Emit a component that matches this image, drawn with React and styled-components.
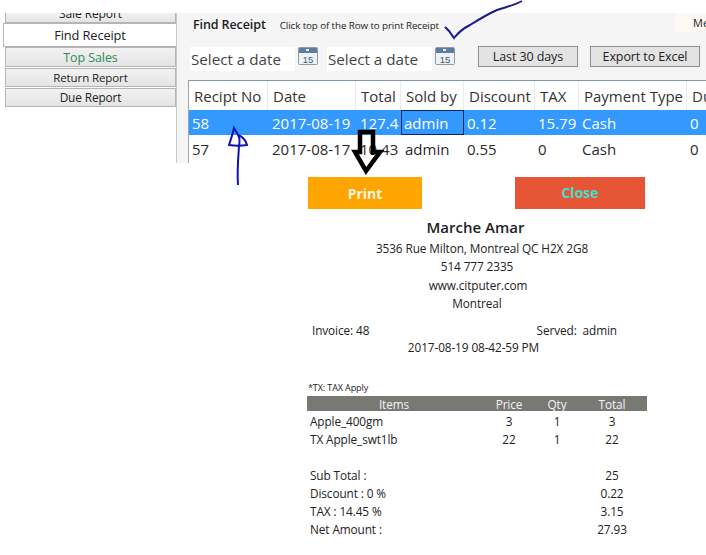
import React from "react";
import styled, { createGlobalStyle } from "styled-components";

const Global = createGlobalStyle`
  html, body { margin: 0; padding: 0; background: #fff; }
  body { font-family: "Open Sans", "Noto Sans", sans-serif; color: #222; }
`;

const Page = styled.div`
  position: relative;
  width: 706px;
  height: 555px;
  overflow: hidden;
  background: #fff;
`;
const Top = styled.div`
  display: flex;
  height: 150px;
  margin-top: 13px;
`;
const Sidebar = styled.nav`
  width: 176px;
  flex: none;
  display: flex;
  flex-direction: column;
  align-items: flex-end;
  border-right: 1px solid #c9c9c9;
`;
const SideButton = styled.div`
  box-sizing: border-box;
  width: ${p => (p.$active ? "173px" : "171px")};
  height: ${p => p.$h}px;
  margin-top: ${p => p.$gap || 0}px;
  display: flex;
  justify-content: center;
  align-items: ${p => (p.$clipped ? "flex-end" : "center")};
  overflow: hidden;
  font-size: ${p => p.$fs || 12}px;
  letter-spacing: -0.1px;
  color: ${p => p.$color || "#222"};
  background: ${p => (p.$active ? "#fff" : "linear-gradient(#f2f2f2,#e4e4e4)")};
  border: 1px solid #b5b5b5;
  border-top: ${p => (p.$clipped ? "none" : "1px solid #b5b5b5")};
  border-right: ${p => (p.$active ? "none" : "1px solid #b5b5b5")};
  line-height: 17px;
`;
const Panel = styled.main`
  flex: 1;
  min-width: 0;
  display: flex;
  flex-direction: column;
  background: #f5f5f5;
  padding-left: 11px;
  overflow: hidden;
`;
const TitleRow = styled.div`
  height: 23px;
  display: flex;
  align-items: center;
  padding-left: 5px;
  gap: 14px;
  position: relative;
`;
const Title = styled.span`
  font-size: 12.5px;
  font-weight: 600;
  color: #1c1c1c;
  letter-spacing: -0.1px;
`;
const Hint = styled.span`
  font-size: 9.8px;
  color: #222;
  letter-spacing: -0.1px;
  padding-top: 1px;
`;
const TabStub = styled.div`
  position: absolute;
  top: 0;
  right: 0;
  width: 31px;
  height: 19px;
  padding-left: 18px;
  box-sizing: border-box;
  background: #fff9f5;
  font-size: 11px;
  line-height: 19px;
  white-space: nowrap;
  overflow: hidden;
`;
const FilterRow = styled.div`
  height: 44px;
  display: flex;
  align-items: center;
  padding-left: 2px;
`;
const DateBox = styled.div`
  width: 105px;
  height: 24px;
  margin-top: 2px;
  padding-left: 1px;
  box-sizing: border-box;
  background: #fff;
  font-size: 15.2px;
  line-height: 25px;
  color: #444;
  white-space: nowrap;
`;
const CalButton = styled.span`
  width: 20px;
  height: 18px;
  margin-left: 3px;
  margin-right: 9px;
  margin-top: -5px;
  display: inline-flex;
`;
const ActionButton = styled.button`
  box-sizing: border-box;
  height: 21px;
  width: ${p => p.$w}px;
  margin-left: ${p => p.$ml}px;
  margin-top: -4px;
  padding: 0;
  font-family: inherit;
  font-size: 12.5px;
  letter-spacing: -0.1px;
  color: #222;
  background: #e3e3e3;
  border: 1px solid #8f8f8f;
`;
const Grid = styled.div`
  flex: 1;
  background: #fff;
  border-top: 1px solid #7f97a8;
  border-left: 1px solid #9aa7b0;
  overflow: hidden;
  display: flex;
  flex-direction: column;
`;
const Row = styled.div`
  display: grid;
  grid-template-columns: 79px 88px 45px 63px 71px 44px 108px 60px;
  height: ${p => p.$h}px;
  align-items: center;
  background: ${p => p.$bg || "#fff"};
  color: ${p => p.$fg || "#2a2a2a"};
  font-size: 15px;
  white-space: nowrap;
`;
const HeadCell = styled.div`
  height: 100%;
  display: flex;
  align-items: center;
  padding: 1px 0 0 5px;
  box-sizing: border-box;
  border-right: 1px solid #e8ecef;
  overflow: hidden;
  color: #333;
`;
const Cell = styled.div`
  height: 100%;
  display: flex;
  align-items: center;
  padding: 1px 0 0 ${p => p.$pl ?? 4}px;
  box-sizing: border-box;
  overflow: hidden;
  ${p => p.$focus && "border: 1px solid #0a2a55;"}
`;
const Buttons = styled.div`
  display: flex;
  justify-content: space-between;
  width: 337px;
  margin: 14px 0 0 308px;
`;
const BigButton = styled.button`
  width: ${p => p.$w}px;
  height: 32px;
  padding: 0 0 ${p => p.$pb || 0}px;
  border: none;
  font-family: inherit;
  font-size: 14px;
  font-weight: 700;
  background: ${p => p.$bg};
  color: ${p => p.$fg};
`;
const Receipt = styled.section`
  width: 340px;
  margin: 0 0 0 307px;
  display: flex;
  flex-direction: column;
  font-size: 11.8px;
  letter-spacing: -0.1px;
  color: #222;
`;
const ShopName = styled.div`
  text-align: center;
  font-size: 15px;
  font-weight: 600;
  line-height: 20px;
  margin: 8px 0 2px;
  letter-spacing: 0;
  padding-right: 3px;
`;
const Line = styled.div`
  text-align: center;
  line-height: 18.4px;
  padding-left: ${p => Math.max(p.$dx || 0, 0)}px;
  padding-right: ${p => Math.max(-(p.$dx || 0), 0)}px;
`;
const MetaRow = styled.div`
  display: flex;
  justify-content: space-between;
  margin-top: 10px;
  padding: 0 30px 0 5px;
  line-height: 15px;
`;
const Note = styled.div`
  font-size: 9px;
  margin-top: 25px;
  line-height: 14px;
  padding-left: 1px;
`;
const TableHead = styled.div`
  display: grid;
  grid-template-columns: 174px 56px 40px 70px;
  height: 15px;
  margin-top: 1px;
  background: #797974;
  color: #f4f4f4;
  line-height: 16px;
  text-align: center;
`;
const TableRow = styled.div`
  display: grid;
  grid-template-columns: 174px 56px 40px 70px;
  height: 18px;
  line-height: 18px;
  margin-top: ${p => p.$mt || 0}px;
`;
const Left = styled.span`
  padding-left: 3px;
  white-space: nowrap;
`;
const Center = styled.span`
  text-align: center;
`;
const Overlay = styled.svg`
  position: absolute;
  left: 0;
  top: 0;
  pointer-events: none;
`;

const Calendar = () => (
  <svg width="20" height="18" viewBox="0 0 20 18">
    <rect x="0.5" y="0.5" width="19" height="17" rx="1" fill="#eef2f6" stroke="#8a9aa8" />
    <rect x="1" y="1" width="18" height="5" fill="#5d7d9e" />
    <rect x="8" y="2" width="3" height="2" fill="#e8eef4" />
    <text x="10" y="15.5" textAnchor="middle" fontSize="9.5" fontFamily="Liberation Sans, sans-serif" fill="#44586c">15</text>
  </svg>
);

const columns = ["Recipt No", "Date", "Total", "Sold by", "Discount", "TAX", "Payment Type", "Due"];

export default function App() {
  return (
    <Page>
      <Global />
      <Top>
        <Sidebar>
          <SideButton $h={10} $clipped>Sale Report</SideButton>
          <SideButton $h={24} $active $fs={12.8}>Find Receipt</SideButton>
          <SideButton $h={20} $color="#2e8b57" $fs={12.5}>Top Sales</SideButton>
          <SideButton $h={19} $gap={1} $fs={11.5}>Return Report</SideButton>
          <SideButton $h={19} $gap={1} $fs={11.8}>Due Report</SideButton>
        </Sidebar>
        <Panel>
          <TitleRow>
            <Title>Find Receipt</Title>
            <Hint>Click top of the Row to print Receipt</Hint>
            <TabStub>Menu</TabStub>
          </TitleRow>
          <FilterRow>
            <DateBox>Select a date</DateBox>
            <CalButton><Calendar /></CalButton>
            <DateBox>Select a date</DateBox>
            <CalButton><Calendar /></CalButton>
            <ActionButton $w={100} $ml={14}>Last 30 days</ActionButton>
            <ActionButton $w={110} $ml={12}>Export to Excel</ActionButton>
          </FilterRow>
          <Grid>
            <Row $h={29}>
              {columns.map(c => <HeadCell key={c}>{c}</HeadCell>)}
            </Row>
            <Row $h={25} $bg="#3399ff" $fg="#fff">
              <Cell $pl={3}>58</Cell>
              <Cell>2017-08-19</Cell>
              <Cell>127.4</Cell>
              <Cell $focus $pl={2}>admin</Cell>
              <Cell $pl={3}>0.12</Cell>
              <Cell $pl={3}>15.79</Cell>
              <Cell $pl={3}>Cash</Cell>
              <Cell $pl={3}>0</Cell>
            </Row>
            <Row $h={26}>
              <Cell $pl={3}>57</Cell>
              <Cell>2017-08-17</Cell>
              <Cell>10.43</Cell>
              <Cell>admin</Cell>
              <Cell $pl={3}>0.55</Cell>
              <Cell $pl={3}>0</Cell>
              <Cell $pl={3}>Cash</Cell>
              <Cell $pl={3}>0</Cell>
            </Row>
          </Grid>
        </Panel>
      </Top>
      <Buttons>
        <BigButton $w={114} $bg="#ffa500" $fg="#fbf3e0">Print</BigButton>
        <BigButton $w={130} $bg="#e65535" $fg="#40e0d0" $pb={1}>Close</BigButton>
      </Buttons>
      <Receipt>
        <ShopName>Marche Amar</ShopName>
        <Line $dx={10}>3536 Rue Milton, Montreal QC H2X 2G8</Line>
        <Line>514 777 2335</Line>
        <Line $dx={2}>www.citputer.com</Line>
        <Line>Montreal</Line>
        <MetaRow><span>Invoice: 48</span><span>Served:&nbsp; admin</span></MetaRow>
        <Line $dx={-7}>2017-08-19 08-42-59 PM</Line>
        <Note>*TX: TAX Apply</Note>
        <TableHead><span>Items</span><span>Price</span><span>Qty</span><span>Total</span></TableHead>
        <TableRow $mt={1}><Left>Apple_400gm</Left><Center>3</Center><Center>1</Center><Center>3</Center></TableRow>
        <TableRow><Left>TX Apple_swt1lb</Left><Center>22</Center><Center>1</Center><Center>22</Center></TableRow>
        <TableRow $mt={18}><Left>Sub Total :</Left><Center /><Center /><Center>25</Center></TableRow>
        <TableRow><Left>Discount : 0 %</Left><Center /><Center /><Center>0.22</Center></TableRow>
        <TableRow><Left>TAX : 14.45 %</Left><Center /><Center /><Center>3.15</Center></TableRow>
        <TableRow><Left>Net Amount :</Left><Center /><Center /><Center>27.93</Center></TableRow>
      </Receipt>
      <Overlay width="706" height="555" viewBox="0 0 706 555">
        <path d="M445 27 L449 31 L454 38 C458 33 464 28 470 25 C478 20 488 14 497 10 C506 7 515 5 522 1" fill="none" stroke="#1a1a8c" strokeWidth="2" />
        <path d="M238 185 C237 172 238 160 239 146 C240 141 240 138 238 135 L234 128 C233 133 231 139 229 145 C235 146 241 146 247 145 C246 141 243 137 238 135" fill="none" stroke="#1212b8" strokeWidth="2" />
        <path d="M360 132 L373 132 L373 152 L380 152 L366 171 L355 152 L360 152 Z" fill="none" stroke="#000" strokeWidth="4.5" />
      </Overlay>
    </Page>
  );
}
